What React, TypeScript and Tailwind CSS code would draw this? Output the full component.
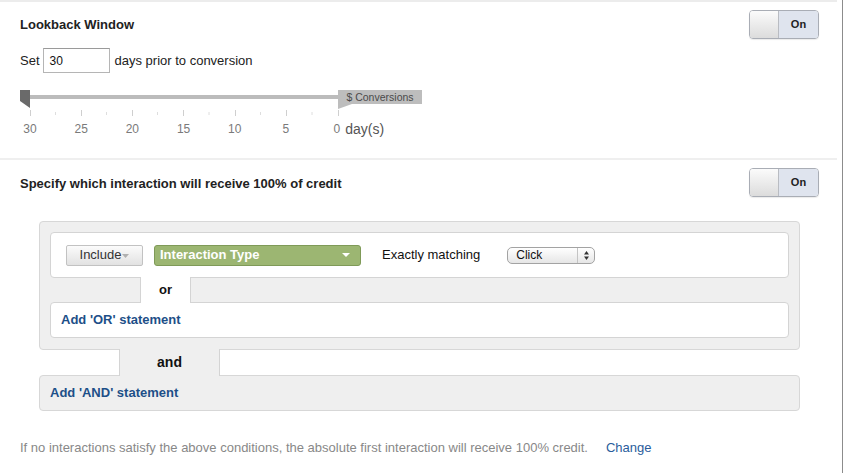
import React from 'react';

const font = { fontFamily: '"Liberation Sans", Arial, Helvetica, sans-serif' };

function Toggle() {
  return (
    <div className="flex h-[29px] w-[70px] overflow-hidden rounded-[4px] border border-[#a9adb5] shadow-[0_1px_1px_rgba(0,0,0,0.08)]">
      <div className="w-[29px] border-r border-[#b9bcc2] bg-gradient-to-b from-[#fbfbfb] to-[#dcdcdc]" />
      <div className="flex flex-1 items-center justify-center bg-[#dfe4ee] text-[11px] font-bold text-[#222]">On</div>
    </div>
  );
}

function Slider() {
  const major = [10, 61, 112, 163, 215, 266, 318];
  const minor = [35.5, 86.5, 137.5, 189, 240.5, 292];
  const labels = ['30', '25', '20', '15', '10', '5'];
  return (
    <div className="mt-[17px]">
      <div className="relative h-[29px] w-[404px]">
        <svg width="404" height="29" viewBox="0 0 404 29" className="block">
          <rect x="10" y="5" width="308" height="4" fill="#bcbcbc" />
          <polygon points="0,0 10,0 10,18 0,11" fill="#6a6a6a" />
          <rect x="318" y="0" width="84" height="14" fill="#bdbdbd" />
          <polygon points="318,14 332,14 318,19" fill="#bdbdbd" />
          {major.map((x) => (
            <line key={x} x1={x + 0.5} y1="20" x2={x + 0.5} y2="26" stroke="#cfcfcf" strokeWidth="1" />
          ))}
          {minor.map((x) => (
            <line key={x} x1={x} y1="22" x2={x} y2="25" stroke="#dedede" strokeWidth="1" />
          ))}
        </svg>
        <div className="absolute left-[318px] top-0 flex h-[14px] w-[84px] items-center justify-center text-[10.5px] leading-none text-[#4a4a4a]">
          $ Conversions
        </div>
      </div>
      <div className="mt-[2px] ml-[-15.6px] flex h-[16px] items-center text-[12px] text-[#7a7a7a]">
        {labels.map((l) => (
          <span key={l} className="w-[51.2px] text-center">{l}</span>
        ))}
        <span className="ml-[22px]">0</span>
        <span className="ml-[5px] text-[14px] text-[#555]">day(s)</span>
      </div>
    </div>
  );
}

export default function App() {
  return (
    <div className="h-[473px] w-[844px] bg-white text-[13px] text-[#222]" style={font}>
      <div className="h-full w-[843px] border-r border-[#8c8c8c]">
        <div className="mr-[5px] h-[2px] bg-[#ececec]" />

        <div className="pl-[20px] pr-[23px]">
          <div className="mt-[8px] flex h-[29px] items-center justify-between">
            <h2 className="text-[13px] font-bold text-[#222]">Lookback Window</h2>
            <Toggle />
          </div>

          <div className="mt-[9px] flex h-[25px] items-center">
            <span>Set</span>
            <div className="ml-[3px] flex h-[25px] w-[67px] items-center border border-[#b5b5b5] border-t-[#9a9a9a] pl-[6px] text-[12px] text-[#111]">
              30
            </div>
            <span className="ml-[5px]">days prior to conversion</span>
          </div>

          <Slider />
        </div>

        <div className="mr-[5px] mt-[21px] h-[2px] bg-[#efefef]" />

        <div className="pl-[20px] pr-[23px]">
          <div className="mt-[8px] flex h-[29px] items-center justify-between">
            <h2 className="pt-[2px] text-[13px] font-bold text-[#222]">Specify which interaction will receive 100% of credit</h2>
            <Toggle />
          </div>

          <div className="ml-[19px] mt-[24px] w-[761px]">
            <div className="rounded-[4px] border border-[#d7d7d7] bg-[#efefef] px-[10px] pb-[11px] pt-[10px]">
              <div className="flex h-[46px] items-center rounded-[4px] border border-[#d4d4d4] bg-white pl-[15px]">
                <button className="flex h-[21px] w-[77px] items-center justify-center rounded-[2px] border border-[#c2c2c2] bg-gradient-to-b from-[#fbfbfb] to-[#e2e2e2] text-[13px] text-[#333]">
                  <span>Include</span>
                  <svg width="7" height="4" viewBox="0 0 7 4" className="ml-[1px] mt-[1px]">
                    <polygon points="0,0 7,0 3.5,4" fill="#b0b0b0" />
                  </svg>
                </button>
                <div className="ml-[11px] flex h-[21px] w-[207px] items-center justify-between rounded-[3px] border border-[#7f9a58] bg-[#9cb672] pl-[5px] pr-[10px] text-[13px] font-bold text-white">
                  <span>Interaction Type</span>
                  <svg width="8" height="4" viewBox="0 0 8 4">
                    <polygon points="0,0 8,0 4,4" fill="#ffffff" />
                  </svg>
                </div>
                <span className="ml-[21px] text-[13px] text-[#111]">Exactly matching</span>
                <div className="ml-[27px] flex h-[17px] w-[88px] items-center rounded-[5px] border border-[#a3a3a3] bg-gradient-to-b from-[#ffffff] to-[#e6e6e6] text-[12px] text-[#111]">
                  <span className="flex-1 pl-[8px]">Click</span>
                  <div className="flex h-full w-[17px] items-center justify-center border-l border-[#c4c4c4]">
                    <svg width="5" height="9" viewBox="0 0 5 9">
                      <polygon points="0,3.5 5,3.5 2.5,0" fill="#333" />
                      <polygon points="0,5.5 5,5.5 2.5,9" fill="#333" />
                    </svg>
                  </div>
                </div>
              </div>

              <div className="flex h-[24px]">
                <div className="w-[90px]" />
                <div className="relative z-10 -my-[1px] flex w-[51px] items-center justify-center border-x border-[#d4d4d4] bg-white text-[13px] font-bold text-[#111]">
                  or
                </div>
              </div>

              <div className="flex h-[36px] items-center rounded-[4px] border border-[#d4d4d4] bg-white pl-[10px] text-[13px] font-bold text-[#1d4f88]">
                Add 'OR' statement
              </div>
            </div>

            <div className="flex h-[25px] bg-white">
              <div className="w-[80px]" />
              <div className="relative z-10 -my-[1px] flex h-[27px] w-[101px] items-center justify-center border-x border-[#d4d4d4] bg-[#efefef] text-[14px] font-bold text-[#111]">
                and
              </div>
            </div>

            <div className="flex h-[36px] items-center rounded-[4px] border border-[#d7d7d7] bg-[#efefef] pl-[10px] text-[13px] font-bold text-[#1d4f88]">
              Add 'AND' statement
            </div>
          </div>

          <p className="mt-[27px] text-[13px] text-[#888]">
            If no interactions satisfy the above conditions, the absolute first interaction will receive 100% credit.
            <span className="ml-[18px] text-[#2a5d9c]">Change</span>
          </p>
        </div>
      </div>
    </div>
  );
}
